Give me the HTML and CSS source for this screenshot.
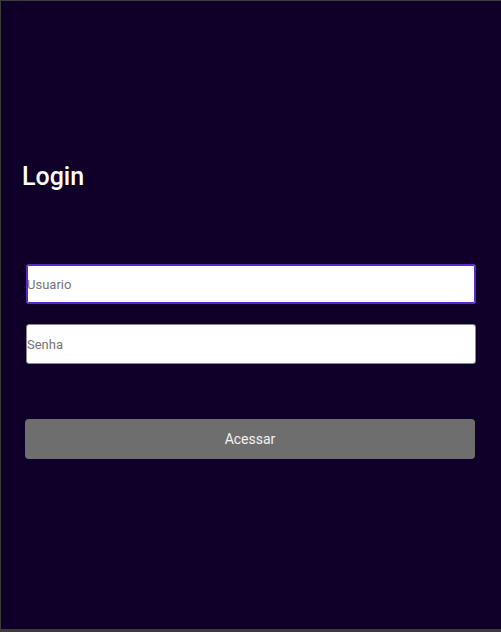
FILE: index.html
```html
<!DOCTYPE html>
<html lang="pt">
<head>
<meta charset="utf-8">
<title>Login</title>
<link rel="stylesheet" href="styles.css">
</head>
<body>
<div class="screen">
  <h1 class="title">Login</h1>
  <form class="form">
    <input class="field field--focus" type="text" placeholder="Usuario">
    <input class="field" type="password" placeholder="Senha">
    <button class="btn" type="button">Acessar</button>
  </form>
</div>
</body>
</html>
```
FILE: styles.css
```css
html, body {
  margin: 0;
  padding: 0;
  background: #3c3c3c;
  font-family: Roboto, "Liberation Sans", sans-serif;
}
.screen {
  box-sizing: border-box;
  width: 501px;
  height: 632px;
  background: #0e0029;
  border-top: 1px solid #3c3c3c;
  border-left: 1px solid #3c3c3c;
  border-bottom: 3px solid #3c3c3c;
  padding: 0 25px 0 21px;
}
.title {
  margin: 158px 0 0 0;
  font-size: 25px;
  font-weight: 500;
  color: #ffffff;
  line-height: 36px;
}
.form {
  display: flex;
  flex-direction: column;
  margin: 69px 0 0 3px;
}
.field {
  box-sizing: border-box;
  width: 450px;
  height: 40px;
  margin-left: 1px;
  padding: 0;
  border: 1px solid #8a8a8a;
  border-radius: 3px;
  background: #ffffff;
  font-family: Roboto, "Liberation Sans", sans-serif;
  font-size: 13px;
  color: #222;
  outline: none;
}
.field::placeholder {
  color: #767676;
}
.field--focus {
  border-color: #5a28c8;
  box-shadow: inset 0 0 0 1px #5a28c8;
}
.field + .field {
  margin-top: 20px;
}
.btn {
  box-sizing: border-box;
  width: 450px;
  height: 40px;
  margin-top: 55px;
  border: none;
  border-radius: 4px;
  background: #6e6e6e;
  color: #f2f2f2;
  font-family: Roboto, "Liberation Sans", sans-serif;
  font-size: 14px;
  padding: 0;
}
```
